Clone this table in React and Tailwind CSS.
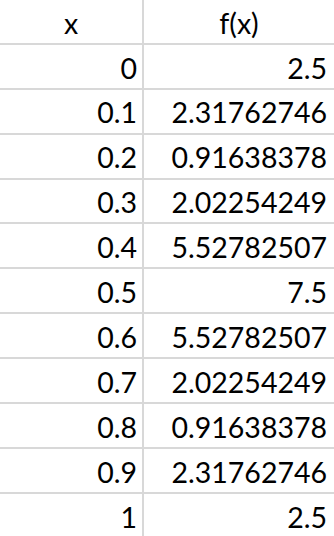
const rows = [
  ['0', '2.5'],
  ['0.1', '2.31762746'],
  ['0.2', '0.91638378'],
  ['0.3', '2.02254249'],
  ['0.4', '5.52782507'],
  ['0.5', '7.5'],
  ['0.6', '5.52782507'],
  ['0.7', '2.02254249'],
  ['0.8', '0.91638378'],
  ['0.9', '2.31762746'],
  ['1', '2.5'],
]

export default function App() {
  return (
    <div className="w-[334px] h-[536px] bg-white overflow-hidden text-black text-[28.5px] font-['Lato',sans-serif]">
      <div className="grid grid-cols-[144px_190px] h-[44.9px] border-b-2 border-[#d8d8d8] leading-none">
        <div className="flex items-center justify-center pt-[3px] border-r-2 border-[#d8d8d8]">x</div>
        <div className="flex items-center justify-center pt-[3px]">f(x)</div>
      </div>
      {rows.map(([x, fx], i) => (
        <div
          key={i}
          className={`grid grid-cols-[144px_190px] h-[44.9px] leading-none ${i < rows.length - 1 ? 'border-b-2 border-[#d8d8d8]' : ''}`}
        >
          <div className="flex items-center justify-end pt-[3px] pr-[5px] border-r-2 border-[#d8d8d8]">{x}</div>
          <div className="flex items-center justify-end pt-[3px] pr-[7px]">{fx}</div>
        </div>
      ))}
    </div>
  )
}
